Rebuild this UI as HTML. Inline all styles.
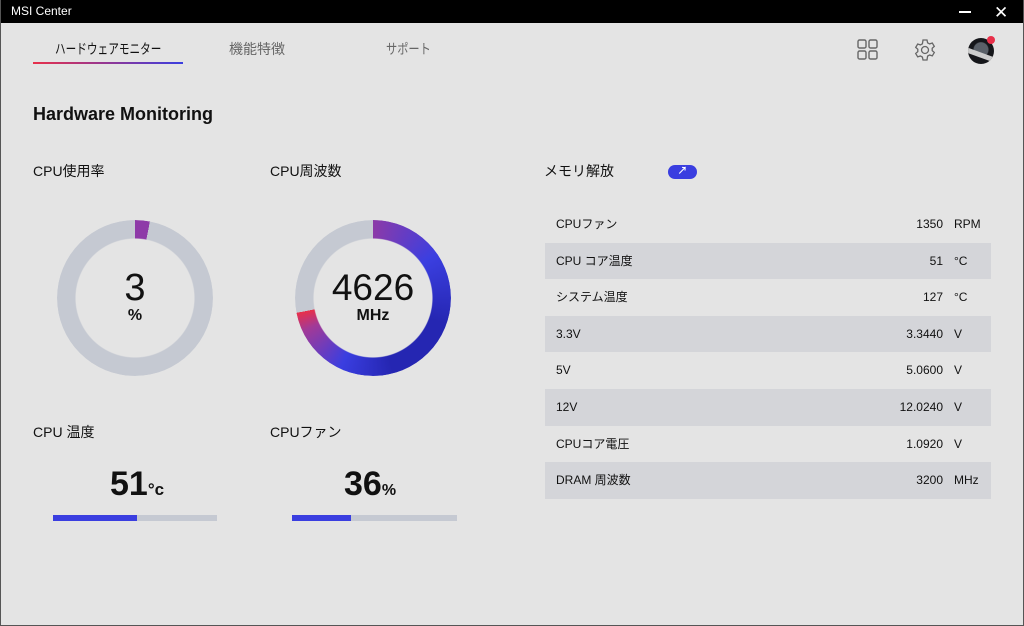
<!DOCTYPE html><html><head><meta charset="utf-8"><style>
*{margin:0;padding:0;box-sizing:border-box}
body{width:1024px;height:626px;overflow:hidden;background:#e4e4e4;font-family:"Liberation Sans","Noto Sans CJK JP",sans-serif;color:#111;position:relative}
.a{position:absolute}
.win{position:absolute;left:0;top:0;width:1024px;height:626px;border:1px solid #555;border-top:none}
.tb{left:0;top:0;width:1024px;height:23px;background:#000;color:#fff;font-size:12px;line-height:23px;padding-left:11px}
.ring{width:156px;height:156px;border-radius:50%;-webkit-mask:radial-gradient(circle,transparent 59px,#000 60px);mask:radial-gradient(circle,transparent 59px,#000 60px)}
.row{position:absolute;left:545px;width:446px;height:36.6px;font-size:12px;line-height:36.6px}
.row .l{position:absolute;left:11px}.row .v{position:absolute;right:48px}.row .u{position:absolute;left:409px}
.sh{background:#d4d5d9}
</style></head><body>
<div class="a tb">MSI Center</div>
<div class="a" style="left:959px;top:11px;width:12px;height:1.5px;background:#fff"></div>
<div class="a" style="left:994px;top:3px;color:#fff;font-size:17px">✕</div>
<div class="win"></div>
<div class="a" style="left:55px;top:39px;font-size:14px;color:#111;transform:scaleX(0.76);transform-origin:left;white-space:nowrap">ハードウェアモニター</div>
<div class="a" style="left:33px;top:62px;width:150px;height:2px;background:linear-gradient(90deg,#e8304a,#3a3ee0)"></div>
<div class="a" style="left:229px;top:39px;font-size:14px;color:#666">機能特徴</div>
<div class="a" style="left:386px;top:39px;font-size:14px;color:#666;transform:scaleX(0.8);transform-origin:left;white-space:nowrap">サポート</div>
<svg class="a" style="left:857px;top:39px" width="22" height="22" fill="none" stroke="#666" stroke-width="1.4"><rect x="1" y="1" width="8" height="8" rx="1.5"/><rect x="12" y="1" width="8" height="8" rx="1.5"/><rect x="1" y="12" width="8" height="8" rx="1.5"/><rect x="12" y="12" width="8" height="8" rx="1.5"/></svg>
<svg class="a" style="left:913px;top:38px" width="24" height="24" viewBox="0 0 24 24" fill="none" stroke="#666" stroke-width="1.3"><path d="M10 2h4l.6 2.8 2 1.1 2.7-.9 2 3.4-2.1 1.9v2.3l2.1 1.9-2 3.4-2.7-.9-2 1.1L14 22h-4l-.6-2.9-2-1.1-2.7.9-2-3.4 2.1-1.9v-2.3L2.7 9.4l2-3.4 2.7.9 2-1.1z"/><circle cx="12" cy="12" r="3.5"/></svg>
<div class="a" style="left:968px;top:38px;width:26px;height:26px;border-radius:50%;background:radial-gradient(circle at 50% 45%,#5a6068 0 7px,#15161a 8px);overflow:hidden"><div class="a" style="left:-4px;top:15px;width:36px;height:5px;background:#ccc;transform:rotate(20deg)"></div></div>
<div class="a" style="left:987px;top:36px;width:8px;height:8px;border-radius:50%;background:#e8304a"></div>
<div class="a" style="left:33px;top:104px;font-size:18px;font-weight:bold">Hardware Monitoring</div>
<div class="a" style="left:33px;top:161px;font-size:14px">CPU使用率</div>
<div class="a" style="left:270px;top:161px;font-size:14px">CPU周波数</div>
<div class="a ring" style="left:57px;top:220px;background:conic-gradient(#8e3aa8 0 11deg,#c5c9d2 11deg)"></div>
<div class="a" style="left:57px;top:268px;width:156px;text-align:center;font-size:38px;line-height:40px">3</div>
<div class="a" style="left:57px;top:307px;width:156px;text-align:center;font-size:16px;font-weight:bold">%</div>
<div class="a ring" style="left:295px;top:220px;background:conic-gradient(#8c3aa8 0deg,#3b3fe0 55deg,#2526b2 110deg,#2526b2 165deg,#3a3ee0 205deg,#a33a96 245deg,#e8304a 259deg,#c5c9d2 259deg)"></div>
<div class="a" style="left:295px;top:268px;width:156px;text-align:center;font-size:37px;line-height:40px">4626</div>
<div class="a" style="left:295px;top:307px;width:156px;text-align:center;font-size:16px;font-weight:bold">MHz</div>
<div class="a" style="left:33px;top:422px;font-size:14px">CPU 温度</div>
<div class="a" style="left:270px;top:422px;font-size:14px">CPUファン</div>
<div class="a" style="left:110px;top:465px;font-size:34px;font-weight:bold;line-height:38px">51<span style="font-size:17px">°c</span></div>
<div class="a" style="left:344px;top:465px;font-size:34px;font-weight:bold;line-height:38px">36<span style="font-size:16px">%</span></div>
<div class="a" style="left:53px;top:515px;width:164px;height:6px;background:#c5c9d2"><div style="width:84px;height:6px;background:#3a3ee0"></div></div>
<div class="a" style="left:292px;top:515px;width:165px;height:6px;background:#c5c9d2"><div style="width:59px;height:6px;background:#3a3ee0"></div></div>
<div class="a" style="left:544px;top:161px;font-size:14px">メモリ解放</div>
<div class="a" style="left:668px;top:165px;width:29px;height:14px;border-radius:7px;background:#3a3ee0;color:#fff;font-size:10px;text-align:center;line-height:14px;font-weight:bold">↗</div>
<div class="row" style="top:206px"><span class="l">CPUファン</span><span class="v">1350</span><span class="u">RPM</span></div>
<div class="row sh" style="top:242.6px"><span class="l">CPU コア温度</span><span class="v">51</span><span class="u">°C</span></div>
<div class="row" style="top:279.2px"><span class="l">システム温度</span><span class="v">127</span><span class="u">°C</span></div>
<div class="row sh" style="top:315.8px"><span class="l">3.3V</span><span class="v">3.3440</span><span class="u">V</span></div>
<div class="row" style="top:352.4px"><span class="l">5V</span><span class="v">5.0600</span><span class="u">V</span></div>
<div class="row sh" style="top:389px"><span class="l">12V</span><span class="v">12.0240</span><span class="u">V</span></div>
<div class="row" style="top:425.6px"><span class="l">CPUコア電圧</span><span class="v">1.0920</span><span class="u">V</span></div>
<div class="row sh" style="top:462.2px"><span class="l">DRAM 周波数</span><span class="v">3200</span><span class="u">MHz</span></div>
</body></html>
